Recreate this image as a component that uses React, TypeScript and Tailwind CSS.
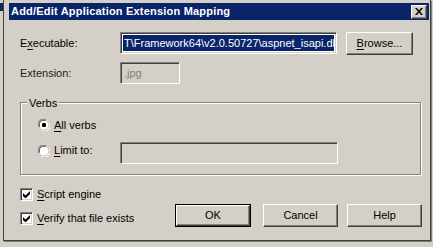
const sunken =
  "border border-t-[#808080] border-l-[#808080] border-b-white border-r-white shadow-[inset_1px_1px_0_#404040,inset_-1px_-1px_0_#d4d0c8]";
const raised =
  "border border-t-white border-l-white border-b-[#404040] border-r-[#404040] shadow-[inset_-1px_-1px_0_#808080]";

function Btn({ children, wide = "w-[75px]", isDefault = false }: { children: React.ReactNode; wide?: string; isDefault?: boolean }) {
  if (isDefault) {
    return (
      <div className={`${wide} h-[23px] border border-black flex`}>
        <div className={`flex-1 ${raised} flex items-center justify-center`}>{children}</div>
      </div>
    );
  }
  return <div className={`${wide} h-[23px] ${raised} flex items-center justify-center`}>{children}</div>;
}

function Radio({ checked }: { checked?: boolean }) {
  return (
    <svg width="12" height="12" viewBox="0 0 12 12" className="shrink-0">
      <path d="M0.5 8 A5.5 5.5 0 0 1 8 0.5" fill="none" stroke="#808080" />
      <path d="M11.5 4 A5.5 5.5 0 0 1 4 11.5" fill="none" stroke="#ffffff" />
      <circle cx="6" cy="6" r="4.5" fill="#fff" />
      <path d="M1.5 7.5 A4.5 4.5 0 0 1 7.5 1.5" fill="none" stroke="#404040" />
      <path d="M10.5 4.5 A4.5 4.5 0 0 1 4.5 10.5" fill="none" stroke="#d4d0c8" />
      {checked && <rect x="4" y="4" width="4" height="4" rx="1.2" fill="#000" />}
    </svg>
  );
}

function Check() {
  return (
    <div className={`w-[13px] h-[13px] bg-white ${sunken} flex items-center justify-center shrink-0`}>
      <svg width="7" height="7" viewBox="0 0 7 7">
        <path d="M0 2v3l2 2h1l4-4V0L2.5 4.5z" fill="#000" />
      </svg>
    </div>
  );
}

const U = ({ c }: { c: string }) => <span className="underline underline-offset-[2px]">{c}</span>;

export default function App() {
  return (
    <div className="w-[433px] h-[247px] bg-[#d4d0c8] overflow-hidden font-['Liberation_Sans',Arial,sans-serif] text-[11px] text-black flex">
      {/* edge of the window behind */}
      <div className="w-[3px] shrink-0 flex flex-col">
        <div className="mt-[3px] h-[8px] bg-[#0a246a]" />
      </div>
      <div className="w-[428px] h-[241px] border-l border-r border-b border-[#404040] shadow-[1px_1px_0_#808080] flex flex-col">
        {/* title bar */}
        <div className="mt-[3px] ml-[5px] mr-[1px] h-[17px] bg-[#0a246a] flex items-center justify-between">
          <span className="pl-[2px] text-white font-bold text-[11px] tracking-[0.2px]">Add/Edit Application Extension Mapping</span>
          <div className={`w-[16px] h-[14px] mr-[2px] bg-[#d4d0c8] ${raised} flex items-center justify-center`}>
            <svg width="8" height="7" viewBox="0 0 8 7">
              <path d="M0 0h2l2 2.5L6 0h2L5 3.5 8 7H6L4 4.5 2 7H0l3-3.5z" fill="#000" />
            </svg>
          </div>
        </div>

        <div className="pl-[16px] flex flex-col">
          {/* executable */}
          <div className="mt-[12px] h-[22px] flex items-center">
            <span className="w-[100px]">
              E<U c="x" />ecutable:
            </span>
            <div className={`w-[217px] h-[22px] bg-white ${sunken} p-[2px] flex`}>
              <div className="flex-1 bg-[#0a246a] text-white flex items-center pl-[1px] overflow-hidden whitespace-nowrap">
                <span>T\Framework64\v2.0.50727\aspnet_isapi.dl</span>
                <span className="ml-[1px] w-[1px] h-[15px] bg-[#f5d78e]" />
              </div>
            </div>
            <div className="ml-[9px]">
              <Btn wide="w-[67px]">
                <U c="B" />rowse...
              </Btn>
            </div>
          </div>

          {/* extension */}
          <div className="mt-[8px] h-[22px] flex items-center">
            <span className="w-[100px] text-[#222]">Extension:</span>
            <div className={`w-[60px] h-[22px] ${sunken} flex items-center pl-[3px] text-[#808080]`}>.jpg</div>
          </div>

          {/* verbs group */}
          <div className="mt-[18px] w-[401px] h-[73px] border border-[#808080] shadow-[1px_1px_0_#fff,inset_1px_1px_0_#fff] relative flex flex-col pl-[17px]">
            <span className="absolute -top-[8px] left-[6px] px-[2px] bg-[#d4d0c8]">Verbs</span>
            <div className="mt-[15px] h-[14px] flex items-center gap-[4px]">
              <Radio checked />
              <span>
                <U c="A" />ll verbs
              </span>
            </div>
            <div className="mt-[10px] h-[22px] flex items-center">
              <div className="w-[82px] flex items-center gap-[4px] -mt-[5px]">
                <Radio />
                <span>
                  <U c="L" />imit to:
                </span>
              </div>
              <div className={`w-[218px] h-[22px] ${sunken}`} />
            </div>
          </div>

          {/* bottom */}
          <div className="flex">
            <div className="w-[155px] flex flex-col">
              <div className="mt-[13px] h-[13px] flex items-center gap-[4px]">
                <Check />
                <span>
                  <U c="S" />cript engine
                </span>
              </div>
              <div className="mt-[11px] h-[13px] flex items-center gap-[4px]">
                <Check />
                <span>
                  <U c="V" />erify that file exists
                </span>
              </div>
            </div>
            <div className="mt-[29px] flex gap-[12px]">
              <Btn isDefault wide="w-[76px]">OK</Btn>
              <Btn>Cancel</Btn>
              <div className="-ml-[3px]">
                <Btn>Help</Btn>
              </div>
            </div>
          </div>
        </div>
      </div>
    </div>
  );
}
